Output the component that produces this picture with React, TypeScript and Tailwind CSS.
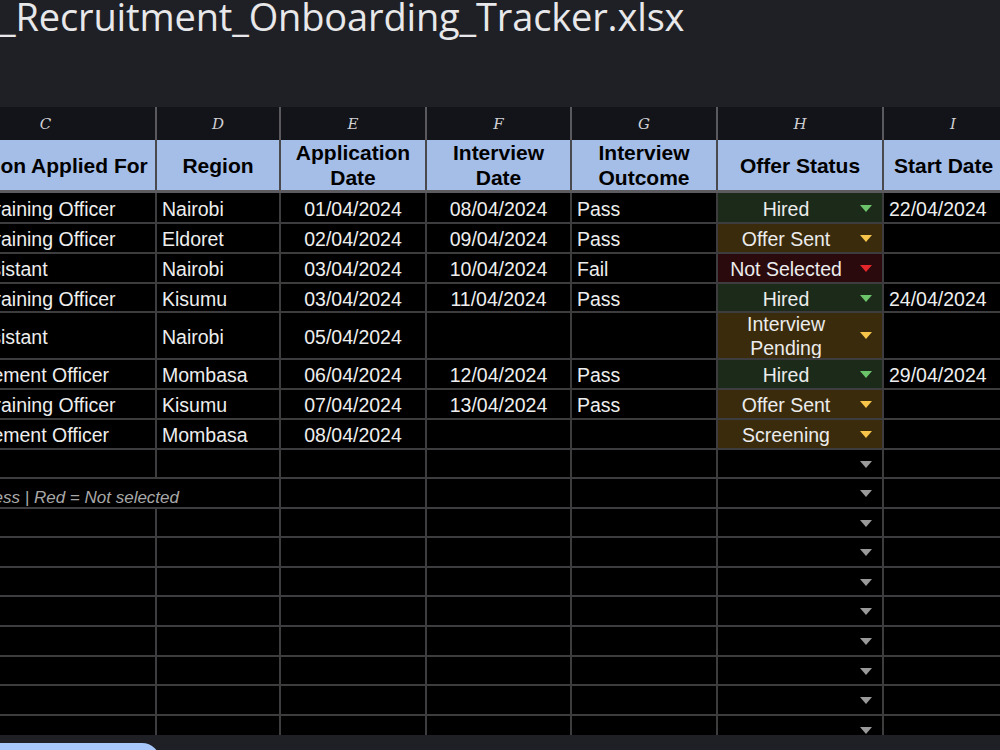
import React from "react";

type Status = "Hired" | "Offer Sent" | "Not Selected" | "Interview Pending" | "Screening" | "";

type Row = {
  c?: string;
  d?: string;
  e?: string;
  f?: string;
  g?: string;
  h?: Status;
  i?: string;
  tall?: boolean;
  note?: boolean;
  h30?: boolean;
};

const rows: Row[] = [
  { c: "Field Training Officer", d: "Nairobi", e: "01/04/2024", f: "08/04/2024", g: "Pass", h: "Hired", i: "22/04/2024" },
  { c: "Field Training Officer", d: "Eldoret", e: "02/04/2024", f: "09/04/2024", g: "Pass", h: "Offer Sent", h30: true },
  { c: "HR Assistant", d: "Nairobi", e: "03/04/2024", f: "10/04/2024", g: "Fail", h: "Not Selected", h30: true },
  { c: "Field Training Officer", d: "Kisumu", e: "03/04/2024", f: "11/04/2024", g: "Pass", h: "Hired", i: "24/04/2024" },
  { c: "HR Assistant", d: "Nairobi", e: "05/04/2024", h: "Interview Pending", tall: true },
  { c: "Engagement Officer", d: "Mombasa", e: "06/04/2024", f: "12/04/2024", g: "Pass", h: "Hired", i: "29/04/2024", h30: true },
  { c: "Field Training Officer", d: "Kisumu", e: "07/04/2024", f: "13/04/2024", g: "Pass", h: "Offer Sent", h30: true },
  { c: "Engagement Officer", d: "Mombasa", e: "08/04/2024", h: "Screening", h30: true },
  { h: "" },
  { h: "", note: true, h30: true },
  { h: "" },
  { h: "", h30: true },
  { h: "" },
  { h: "", h30: true },
  { h: "", h30: true },
  { h: "" },
  { h: "", h30: true },
  { h: "", h30: true },
];

const cellCore = "shrink-0 border-r-2 border-b-2 border-[#3d3d3f] flex items-center overflow-hidden whitespace-nowrap";
const cellBase = `${cellCore} pt-[4px]`;

function Arrow({ color }: { color: string }) {
  return (
    <svg width="12" height="7" viewBox="0 0 12 7" className="shrink-0">
      <polygon points="0,0 12,0 6,7" fill={color} />
    </svg>
  );
}

function StatusCell({ status, tall }: { status: Status; tall?: boolean }) {
  let bg = "bg-black";
  let arrow = "#9a9a9a";
  if (status === "Hired") {
    bg = "bg-[#1c2a1a]";
    arrow = "#6cc46a";
  } else if (status === "Offer Sent" || status === "Interview Pending" || status === "Screening") {
    bg = "bg-[#3a2b0d]";
    arrow = "#f6c549";
  } else if (status === "Not Selected") {
    bg = "bg-[#2a0a0c]";
    arrow = "#e5262b";
  }
  return (
    <div className={`${cellCore} ${tall ? "pt-0" : "pt-[2px]"} w-[166px] ${bg} pl-[4px] pr-[10px]`}>
      <div className="flex-1 text-center leading-[24px] whitespace-normal text-[#ececec] pr-[10px]">
        {status === "Interview Pending" ? (
          <>
            Interview
            <br />
            Pending
          </>
        ) : (
          status
        )}
      </div>
      <div className="-mt-[1px]">
        <Arrow color={arrow} />
      </div>
    </div>
  );
}

export default function App() {
  const letters = [
    { l: "C", w: "w-[221px]" },
    { l: "D", w: "w-[124px]" },
    { l: "E", w: "w-[146px]" },
    { l: "F", w: "w-[145px]" },
    { l: "G", w: "w-[146px]" },
    { l: "H", w: "w-[166px]" },
    { l: "I", w: "w-[140px]" },
  ];

  return (
    <div
      className="w-[1000px] h-[750px] overflow-hidden bg-[#1f2025] flex flex-col"
      style={{ fontFamily: "'Liberation Sans', Arial, sans-serif" }}
    >
      {/* Title bar */}
      <div className="h-[107px] shrink-0 bg-[#1f2025] overflow-hidden">
        <div
          className="text-[38px] leading-[40px] text-[#e8e8ea] whitespace-nowrap -mt-[4px] -ml-[1px] tracking-[-0.15px]"
          style={{ fontFamily: "'Open Sans', 'Noto Sans', sans-serif" }}
        >
          _Recruitment_Onboarding_Tracker.xlsx
        </div>
      </div>

      {/* Sheet */}
      <div className="h-[628px] shrink-0 overflow-hidden bg-black">
        <div className="-ml-[64px] w-[1200px] flex flex-col">
          {/* Column letters */}
          <div className="flex h-[33px] bg-[#131419]">
            {letters.map((c) => (
              <div
                key={c.l}
                className={`${c.w} shrink-0 border-r-2 border-[#5a5a5e] flex items-center justify-center text-[15px] italic text-[#d0d0d4] pt-[1px]`}
                style={{ fontFamily: "'DejaVu Serif', serif" }}
              >
                {c.l}
              </div>
            ))}
          </div>

          {/* Header row */}
          <div className="flex h-[53px] bg-[#a5bee8] border-b-[3px] border-[#5c5c60] text-[21px] font-bold text-black leading-[25px]">
            <div className="w-[221px] shrink-0 border-r-2 border-[#4a4a4e] flex items-center justify-center text-center whitespace-nowrap">
              Position Applied For
            </div>
            <div className="w-[124px] shrink-0 border-r-2 border-[#4a4a4e] flex items-center justify-center text-center">Region</div>
            <div className="w-[146px] shrink-0 border-r-2 border-[#4a4a4e] flex items-center justify-center text-center">
              Application
              <br />
              Date
            </div>
            <div className="w-[145px] shrink-0 border-r-2 border-[#4a4a4e] flex items-center justify-center text-center">
              Interview
              <br />
              Date
            </div>
            <div className="w-[146px] shrink-0 border-r-2 border-[#4a4a4e] flex items-center justify-center text-center">
              Interview
              <br />
              Outcome
            </div>
            <div className="w-[166px] shrink-0 border-r-2 border-[#4a4a4e] flex items-center justify-center text-center">Offer Status</div>
            <div className="w-[140px] shrink-0 border-r-2 border-[#4a4a4e] flex items-center pl-[10px] whitespace-nowrap">Start Date</div>
          </div>

          {/* Data rows */}
          {rows.map((r, idx) => {
            const h = r.tall ? "h-[47px]" : idx === 0 ? "h-[31px]" : r.h30 ? "h-[30px]" : "h-[29px]";
            return (
              <div key={idx} className={`flex ${h} text-[19.5px] text-[#eeeeee]`}>
                {r.note ? (
                  <div className={`${cellCore} pt-[9px] w-[345px] justify-end pr-[100px] italic text-[17px] text-[#a8a8a8]`}>
                    Legend: Green = Hired | Yellow = In progress | Red = Not selected
                  </div>
                ) : (
                  <>
                    <div className={`${cellBase} w-[221px]`}>{r.c}</div>
                    <div className={`${cellBase} w-[124px] pl-[5px]`}>{r.d}</div>
                  </>
                )}
                <div className={`${cellBase} w-[146px] justify-center`}>{r.e}</div>
                <div className={`${cellBase} w-[145px] justify-center`}>{r.f}</div>
                <div className={`${cellBase} w-[146px] pl-[5px]`}>{r.g}</div>
                <StatusCell status={r.h ?? ""} tall={r.tall} />
                <div className={`${cellBase} w-[140px] pl-[5px]`}>{r.i}</div>
              </div>
            );
          })}
        </div>
      </div>

      {/* Bottom bar */}
      <div className="flex-1 bg-[#1f2025] pt-[8px]">
        <div className="w-[160px] h-[20px] bg-[#a8c7fa] rounded-tr-[18px]" />
      </div>
    </div>
  );
}
